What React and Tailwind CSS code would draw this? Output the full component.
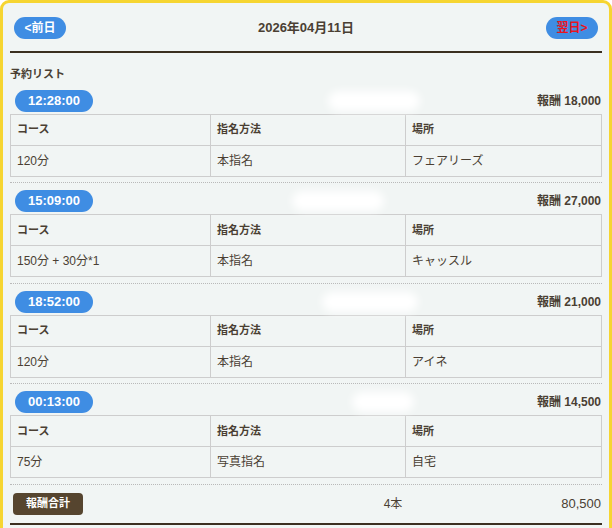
import { useState } from "react"

const RESERVATIONS = [
    { time: "12:28:00", reward: "18,000", course: "120分", method: "本指名", place: "フェアリーズ", blur: "left-[318px] w-[92px]" },
    { time: "15:09:00", reward: "27,000", course: "150分 + 30分*1", method: "本指名", place: "キャッスル", blur: "left-[282px] w-[92px]" },
    { time: "18:52:00", reward: "21,000", course: "120分", method: "本指名", place: "アイネ", blur: "left-[312px] w-[96px]" },
    { time: "00:13:00", reward: "14,500", course: "75分", method: "写真指名", place: "自宅", blur: "left-[342px] w-[62px]" },
]

function Reservation({ item }) {
    return (
        <div className="border-b border-dotted border-[#b9b9b9] pb-[5.5px] pt-[7px]">
            <div className="relative flex items-center justify-between pl-[5px] pr-[1px]">
                <span className="flex h-[22px] w-[78px] items-center justify-center rounded-full bg-[#3f8de3] text-[13px] font-bold text-white">
                    {item.time}
                </span>
                {/* blurred name */}
                <span className={`absolute top-[1px] h-[20px] rounded-full bg-white blur-[4px] ${item.blur}`} />
                <span className="text-[12px] font-bold text-[#4a3f33]">報酬 {item.reward}</span>
            </div>
            <table className="mt-[2px] w-full table-fixed border-collapse border border-[#cdcdcd] text-left text-[#4a3f33]">
                <colgroup>
                    <col className="w-[200px]" />
                    <col className="w-[195px]" />
                    <col />
                </colgroup>
                <tbody>
                    <tr className="h-[31px]">
                        <th className="border border-[#cdcdcd] px-[6px] text-[11px] font-bold">コース</th>
                        <th className="border border-[#cdcdcd] px-[6px] text-[11px] font-bold">指名方法</th>
                        <th className="border border-[#cdcdcd] px-[6px] text-[11px] font-bold">場所</th>
                    </tr>
                    <tr className="h-[31px]">
                        <td className="border border-[#cdcdcd] px-[6px] text-[12px]">{item.course}</td>
                        <td className="border border-[#cdcdcd] px-[6px] text-[12px]">{item.method}</td>
                        <td className="border border-[#cdcdcd] px-[6px] text-[12px]">{item.place}</td>
                    </tr>
                </tbody>
            </table>
        </div>
    )
}

export default function App() {
    const [day] = useState("2026年04月11日")

    return (
        <div className="h-[528px] w-[612px] overflow-hidden bg-white font-['Liberation_Sans','Noto_Sans_CJK_JP',sans-serif]">
            <div className="h-[540px] rounded-t-[9px] border-[3px] border-[#f6d531] bg-[#f1f5f4] px-[7px] pt-[14px]">
                {/* header */}
                <div className="flex items-center justify-between px-[4px] pb-[12px]">
                    <button className="flex h-[22px] w-[52px] items-center justify-center rounded-full bg-[#3f8de3] text-[12px] font-bold text-white">
                        &lt;前日
                    </button>
                    <span className="text-[13px] font-bold text-[#4a3f33]">{day}</span>
                    <button className="flex h-[22px] w-[52px] items-center justify-center rounded-full bg-[#3f8de3] text-[12px] font-bold text-[#e8141e]">
                        翌日&gt;
                    </button>
                </div>
                <div className="h-[2px] bg-[#3b2f20]" />

                <div className="pt-[13px] text-[11px] font-bold text-[#4a3f33]">予約リスト</div>

                {RESERVATIONS.map((r) => (
                    <Reservation key={r.time} item={r} />
                ))}

                {/* total */}
                <div className="flex h-[38px] items-center text-[#4a3f33]">
                    <span className="ml-[3px] flex h-[22px] w-[70px] items-center justify-center rounded-[4px] bg-[#56452f] text-[11px] font-bold text-white">
                        報酬合計
                    </span>
                    <span className="ml-[280px] w-[60px] text-center text-[12px]">4本</span>
                    <span className="flex-1 pr-[1px] text-right text-[13px]">80,500</span>
                </div>
                <div className="h-[2px] bg-[#3b2f20]" />
                <div className="mt-[3px] h-[2px] bg-[#d8d8d8]" />
            </div>
        </div>
    )
}
